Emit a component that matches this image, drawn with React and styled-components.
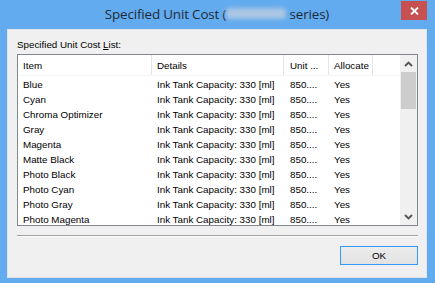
import React from "react";
import styled, { createGlobalStyle } from "styled-components";

const UI_FONT = `"Liberation Sans", Arial, sans-serif`;

const Global = createGlobalStyle`
  html, body { margin: 0; padding: 0; background: #62aaee; }
  body { font-family: ${UI_FONT}; }
`;

const Frame = styled.div`
  width: 435px;
  height: 283px;
  box-sizing: border-box;
  background: #63abef;
  display: flex;
  flex-direction: column;
  padding: 0 8px 5px 7px;
  position: relative;
  overflow: hidden;
`;

const TitleBar = styled.div`
  height: 29px;
  display: flex;
  align-items: center;
  justify-content: center;
  font-family: "Open Sans", "Noto Sans", sans-serif;
  font-size: 13.4px;
  letter-spacing: -0.15px;
  color: #1d2a38;
  padding-bottom: 2px;
  box-sizing: border-box;
  white-space: pre;
`;

const Blur = styled.span`
  display: inline-block;
  width: 60px;
  height: 11px;
  background: #a9c6e4;
  border-radius: 4px;
  filter: blur(2px);
  vertical-align: middle;
`;

const CloseButton = styled.div`
  position: absolute;
  top: 1px;
  right: 8px;
  width: 26px;
  height: 19px;
  background: #c75050;
  display: flex;
  align-items: center;
  justify-content: center;
`;

const Client = styled.div`
  flex: 1;
  background: #f0f0f0;
  box-shadow: inset 0 0 0 1px #dfe4ea;
  display: flex;
  flex-direction: column;
  padding: 8px 9px 0 10px;
  font-family: ${UI_FONT};
  font-size: 9.8px;
  color: #000;
`;

const Label = styled.div`
  height: 17px;
  line-height: 15px;
  u { text-decoration: underline; }
`;

const List = styled.div`
  height: 172px;
  box-sizing: border-box;
  border: 1px solid #828790;
  background: #fff;
  display: flex;
  overflow: hidden;
`;

const ListMain = styled.div`
  flex: 1;
  display: flex;
  flex-direction: column;
  overflow: hidden;
`;

const cols = "134px 132px 45px 44px 1fr";

const Header = styled.div`
  display: grid;
  grid-template-columns: ${cols};
  height: 21px;
  flex-shrink: 0;
  border-bottom: 1px solid #f3f6fa;
  box-sizing: border-box;
`;

const HeadCell = styled.div`
  padding-left: ${(p) => p.$pad || 5}px;
  line-height: 22px;
  border-right: ${(p) => (p.$last ? "none" : "1px solid #e5e5e5")};
  white-space: nowrap;
  overflow: hidden;
`;

const Row = styled.div`
  display: grid;
  grid-template-columns: ${cols};
  height: 15px;
  line-height: 15px;
  flex-shrink: 0;
`;

const Cell = styled.div`
  padding-left: ${(p) => p.$pad || 5}px;
  white-space: nowrap;
  overflow: hidden;
`;

const Body = styled.div`
  padding-top: 1px;
  display: flex;
  flex-direction: column;
`;

const Scrollbar = styled.div`
  width: 17px;
  background: #f0f0f0;
  display: flex;
  flex-direction: column;
  align-items: center;
`;

const Arrow = styled.div`
  height: 17px;
  width: 17px;
  display: flex;
  align-items: center;
  justify-content: center;
`;

const Thumb = styled.div`
  width: 15px;
  height: 37px;
  background: #cdcdcd;
`;

const Track = styled.div`
  flex: 1;
`;

const Separator = styled.div`
  margin-top: 9px;
  height: 1px;
  background: #a0a0a0;
  border-bottom: 1px solid #fff;
`;

const Footer = styled.div`
  display: flex;
  justify-content: flex-end;
  margin-top: 9px;
`;

const Button = styled.button`
  width: 78px;
  height: 19px;
  box-sizing: border-box;
  border: 1px solid #3399ff;
  background: linear-gradient(#ececec, #e2e2e2);
  font-family: ${UI_FONT};
  font-size: 9.8px;
  color: #000;
  padding: 0;
`;

const items = [
  "Blue",
  "Cyan",
  "Chroma Optimizer",
  "Gray",
  "Magenta",
  "Matte Black",
  "Photo Black",
  "Photo Cyan",
  "Photo Gray",
  "Photo Magenta",
];

const Chevron = ({ up }) => (
  <svg width="9" height="6" viewBox="0 0 9 6">
    <path
      d={up ? "M1 5 L4.5 1.5 L8 5" : "M1 1 L4.5 4.5 L8 1"}
      fill="none"
      stroke="#555"
      strokeWidth="1.9"
    />
  </svg>
);

export default function App() {
  return (
    <>
      <Global />
      <Frame>
        <TitleBar>
          Specified Unit Cost (<Blur /> series)
        </TitleBar>
        <CloseButton>
          <svg width="9" height="8" viewBox="0 0 9 8">
            <path d="M1 0.5 L8 7.5 M8 0.5 L1 7.5" stroke="#fff" strokeWidth="1.8" />
          </svg>
        </CloseButton>
        <Client>
          <Label>
            Specified Unit Cost <u>L</u>ist:
          </Label>
          <List>
            <ListMain>
              <Header>
                <HeadCell>Item</HeadCell>
                <HeadCell>Details</HeadCell>
                <HeadCell $pad={6}>Unit ...</HeadCell>
                <HeadCell>Allocate</HeadCell>
                <HeadCell $last />
              </Header>
              <Body>
                {items.map((it) => (
                  <Row key={it}>
                    <Cell>{it}</Cell>
                    <Cell>Ink Tank Capacity: 330 [ml]</Cell>
                    <Cell $pad={6}>850....</Cell>
                    <Cell>Yes</Cell>
                    <Cell />
                  </Row>
                ))}
              </Body>
            </ListMain>
            <Scrollbar>
              <Arrow>
                <Chevron up />
              </Arrow>
              <Thumb />
              <Track />
              <Arrow>
                <Chevron />
              </Arrow>
            </Scrollbar>
          </List>
          <Separator />
          <Footer>
            <Button>OK</Button>
          </Footer>
        </Client>
      </Frame>
    </>
  );
}
